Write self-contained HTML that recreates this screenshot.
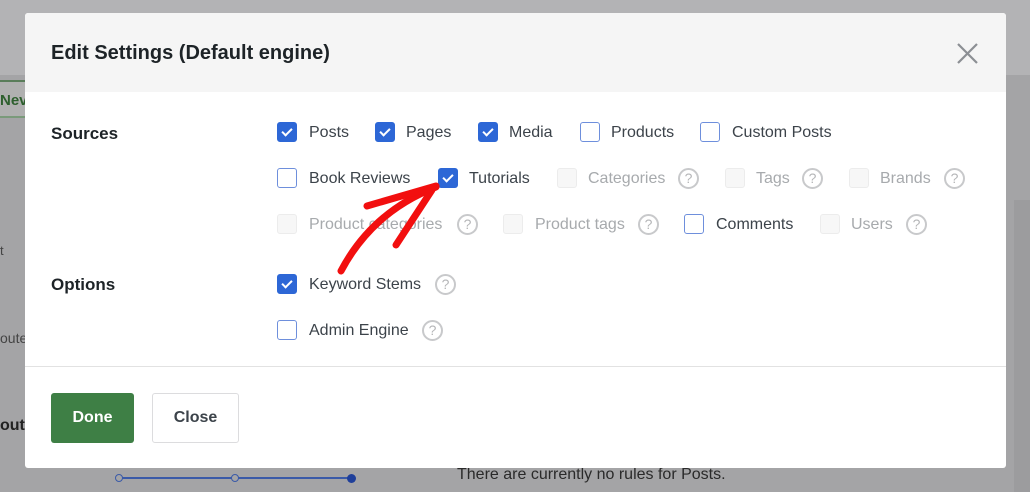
<!DOCTYPE html>
<html><head><style>
*{box-sizing:border-box;margin:0;padding:0}
body{width:1030px;height:492px;overflow:hidden;position:relative;background:#a4a4a6;font-family:"Liberation Sans",sans-serif}
.a{position:absolute}
.modal{left:25px;top:13px;width:981px;height:455px;background:#fff;border-radius:3px}
.hdr{left:25px;top:13px;width:981px;height:79px;background:#f5f5f5;border-radius:3px 3px 0 0}
.cb{position:absolute;width:20px;height:20px;border:1.5px solid #6e8fdc;border-radius:3px;background:#fff}
.cb.on{background:#2d67d6;border-color:#2d67d6}
.cb.on::after{content:"";position:absolute;left:6px;top:3px;width:4px;height:8px;border:solid #fff;border-width:0 2px 2px 0;transform:rotate(45deg)}
.cb.dis{border:1px solid #ececec;background:#f7f7f7}
.t{position:absolute;font-size:16px;color:#3c434a;line-height:21px}
.t.dis{color:#a7aaad}
.q{position:absolute;width:21px;height:21px;border:2px solid #c8c9cb;border-radius:50%;color:#b5b6b8;font-size:14px;text-align:center;line-height:17px}
.lbl{position:absolute;left:51px;font-size:17px;font-weight:bold;color:#1d2327}
</style></head><body>
<div class="a" style="left:0;top:0;width:1030px;height:75px;background:#b3b3b5"></div>
<div class="a" style="left:0;top:80px;width:25px;height:38px;border-top:2px solid #5a7d5a;border-bottom:2px solid #7a9a7a;background:#b0b0b0;color:#2d5f2d;font-weight:bold;font-size:15px;line-height:38px">Nev</div>
<div class="a" style="left:0;top:330px;font-size:14px;color:#444;">oute</div>
<div class="a" style="left:0;top:417px;font-size:16px;color:#222;font-weight:bold">oute</div>
<div class="a" style="left:0;top:243px;font-size:13px;color:#444">t</div>
<div class="a" style="left:1014px;top:200px;width:16px;height:292px;background:#9c9c9e"></div>
<div class="a" style="left:118px;top:477px;width:234px;height:2px;background:#3a5aa8"></div>
<div class="a" style="left:115px;top:474px;width:8px;height:8px;border-radius:50%;border:1.5px solid #3a5aa8;background:#a4a4a6"></div>
<div class="a" style="left:231px;top:474px;width:8px;height:8px;border-radius:50%;border:1.5px solid #3a5aa8;background:#a4a4a6"></div>
<div class="a" style="left:347px;top:474px;width:9px;height:9px;border-radius:50%;background:#1f3f9a"></div>
<div class="a" style="left:457px;top:466px;font-size:16px;color:#2a2a2a">There are currently no rules for Posts.</div>

<div class="a modal"></div>
<div class="a hdr"></div>
<div class="a" style="left:51px;top:42px;font-size:20px;font-weight:bold;color:#1d2327">Edit Settings (Default engine)</div>
<svg class="a" style="left:957px;top:43px" width="21" height="21"><path d="M1 1L20 20M20 1L1 20" stroke="#8c8f94" stroke-width="2.2"/></svg>

<div class="lbl" style="top:124px">Sources</div>
<div class="lbl" style="top:275px">Options</div>

<div class="cb on" style="left:277px;top:122px"></div><div class="t" style="left:309px;top:122px">Posts</div>
<div class="cb on" style="left:375px;top:122px"></div><div class="t" style="left:406px;top:122px">Pages</div>
<div class="cb on" style="left:478px;top:122px"></div><div class="t" style="left:509px;top:122px">Media</div>
<div class="cb" style="left:580px;top:122px"></div><div class="t" style="left:611px;top:122px">Products</div>
<div class="cb" style="left:700px;top:122px"></div><div class="t" style="left:732px;top:122px">Custom Posts</div>

<div class="cb" style="left:277px;top:168px"></div><div class="t" style="left:309px;top:168px">Book Reviews</div>
<div class="cb on" style="left:438px;top:168px"></div><div class="t" style="left:469px;top:168px">Tutorials</div>
<div class="cb dis" style="left:557px;top:168px"></div><div class="t dis" style="left:588px;top:168px">Categories</div><div class="q" style="left:678px;top:168px">?</div>
<div class="cb dis" style="left:725px;top:168px"></div><div class="t dis" style="left:756px;top:168px">Tags</div><div class="q" style="left:802px;top:168px">?</div>
<div class="cb dis" style="left:849px;top:168px"></div><div class="t dis" style="left:880px;top:168px">Brands</div><div class="q" style="left:944px;top:168px">?</div>

<div class="cb dis" style="left:277px;top:214px"></div><div class="t dis" style="left:309px;top:214px">Product categories</div><div class="q" style="left:457px;top:214px">?</div>
<div class="cb dis" style="left:503px;top:214px"></div><div class="t dis" style="left:535px;top:214px">Product tags</div><div class="q" style="left:638px;top:214px">?</div>
<div class="cb" style="left:684px;top:214px"></div><div class="t" style="left:716px;top:214px">Comments</div>
<div class="cb dis" style="left:820px;top:214px"></div><div class="t dis" style="left:851px;top:214px">Users</div><div class="q" style="left:906px;top:214px">?</div>

<div class="cb on" style="left:277px;top:274px"></div><div class="t" style="left:309px;top:274px">Keyword Stems</div><div class="q" style="left:435px;top:274px">?</div>
<div class="cb" style="left:277px;top:320px"></div><div class="t" style="left:309px;top:320px">Admin Engine</div><div class="q" style="left:422px;top:320px">?</div>

<div class="a" style="left:25px;top:366px;width:981px;height:1px;background:#e2e2e2"></div>
<div class="a" style="left:51px;top:393px;width:83px;height:50px;background:#3e7f45;border-radius:3px;color:#fff;font-weight:bold;font-size:16px;text-align:center;line-height:50px">Done</div>
<div class="a" style="left:152px;top:393px;width:87px;height:50px;background:#fff;border:1px solid #dcdcde;border-radius:3px;color:#3c434a;font-weight:bold;font-size:16px;text-align:center;line-height:48px">Close</div>

<svg class="a" style="left:0;top:0" width="1030" height="492">
<g stroke="#f20f0f" stroke-width="7" stroke-linecap="round" fill="none">
<path d="M341 271 C360 235 390 205 436 187"/>
<path d="M367 206 L436 186"/>
<path d="M396 245 L432 190"/>
</g></svg>
</body></html>
